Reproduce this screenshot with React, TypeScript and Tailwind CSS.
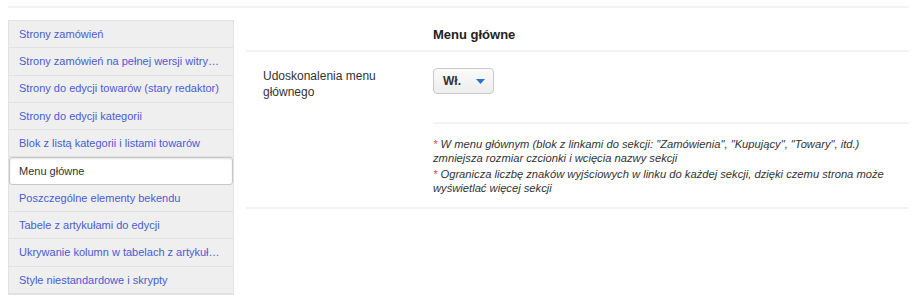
const items = [
  "Strony zamówień",
  "Strony zamówień na pełnej wersji witry…",
  "Strony do edycji towarów (stary redaktor)",
  "Strony do edycji kategorii",
  "Blok z listą kategorii i listami towarów",
  "Menu główne",
  "Poszczególne elementy bekendu",
  "Tabele z artykułami do edycji",
  "Ukrywanie kolumn w tabelach z artykuł…",
  "Style niestandardowe i skrypty",
];

function Sidebar() {
  return (
    <div className="w-[226px] shrink-0 border border-[#e2e2e2] bg-[#efefef]">
      {items.map((label) => {
        const active = label === "Menu główne";
        return active ? (
          <div
            key={label}
            className="flex h-[27.3px] items-center rounded-[3px] border border-[#c8c8c8] bg-white px-[9px] text-[11px] text-[#333] shadow-[inset_0_1px_2px_rgba(0,0,0,0.12)]"
          >
            {label}
          </div>
        ) : (
          <div
            key={label}
            className="flex h-[27.3px] items-center whitespace-nowrap border-b border-[#e2e2e2] px-[10px] text-[11px] text-[#4a5bd4]"
          >
            {label}
          </div>
        );
      })}
    </div>
  );
}

function Settings() {
  return (
    <div className="ml-[12px] flex-1">
      <div className="flex h-[32px] items-center border-b-2 border-[#f3f3f3] pl-[187px] text-[13px] font-bold text-[#222]">
        Menu główne
      </div>
      <div className="border-b-2 border-[#f3f3f3] pb-[12px]">
        <div className="flex pt-[16px]">
          <div className="w-[187px] pl-[17px] text-[12px] leading-[16px] text-[#333]">
            Udoskonalenia menu
            <br />
            głównego
          </div>
          <div className="flex h-[26px] w-[61px] items-center justify-between rounded-[4px] border border-[#c9c9c9] bg-gradient-to-b from-[#fbfbfb] to-[#ededed] pl-[9px] pr-[8px]">
            <span className="text-[12px] font-bold text-[#333]">Wł.</span>
            <svg width="9" height="5" viewBox="0 0 9 5">
              <path d="M0 0h9L4.5 5z" fill="#2a73c5" />
            </svg>
          </div>
        </div>
        <div className="ml-[187px] mt-[22px] border-t-2 border-[#f3f3f3] pt-[13px] text-[11.2px] italic leading-[14px] text-[#333]">
          <p>
            <span className="text-[#e0484f]">*</span> W menu głównym (blok z
            linkami do sekcji: "Zamówienia", "Kupujący", "Towary", itd.)
            <br />
            zmniejsza rozmiar czcionki i wcięcia nazwy sekcji
          </p>
          <p className="mt-[2px]">
            <span className="text-[#e0484f]">*</span> Ogranicza liczbę znaków
            wyjściowych w linku do każdej sekcji, dzięki czemu strona może
            <br />
            wyświetlać więcej sekcji
          </p>
        </div>
      </div>
    </div>
  );
}

export default function App() {
  return (
    <div
      className="h-[304px] w-[920px] bg-white px-[8px] pt-[6px]"
      style={{ fontFamily: '"Liberation Sans", Arial, sans-serif' }}
    >
      <div className="h-[2px] w-[901px] bg-[#f3f3f3]" />
      <div className="mt-[12px] flex w-[901px]">
        <Sidebar />
        <Settings />
      </div>
    </div>
  );
}
